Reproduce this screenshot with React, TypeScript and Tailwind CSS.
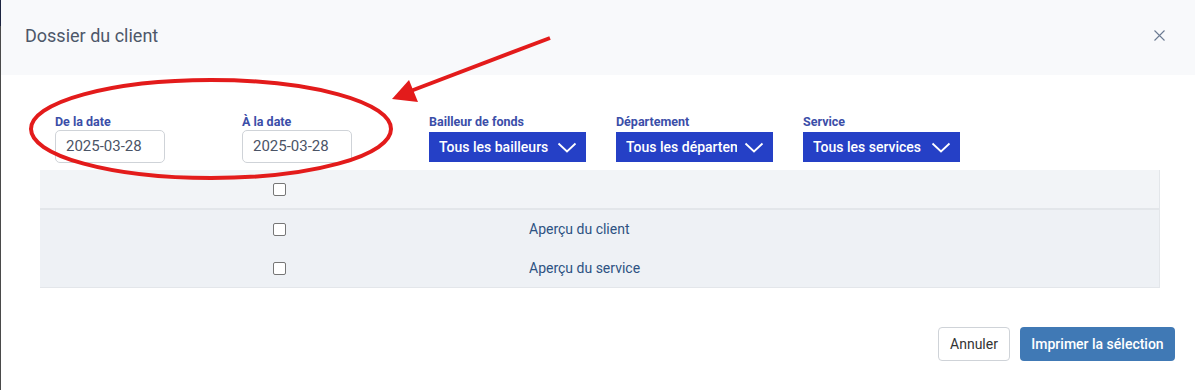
import React from "react";

const Chevron = () => (
  <svg width="20" height="11" viewBox="0 0 20 11" className="shrink-0">
    <path d="M1.5 1.5 L10 9.5 L18.5 1.5" fill="none" stroke="white" strokeWidth="1.8" />
  </svg>
);

const DateField = ({ label, value }: { label: string; value: string }) => (
  <div className="w-[187px] shrink-0">
    <div className="h-4 text-[12.5px] font-bold leading-4 text-[#3b4ea8]">{label}</div>
    <div className="flex h-[33px] w-[110px] items-center rounded-[5px] border border-[#cfd3d8] pl-[10px] text-[15px] text-[#4b5466]">
      {value}
    </div>
  </div>
);

const DropField = ({ label, value }: { label: string; value: string }) => (
  <div className="w-[187px] shrink-0">
    <div className="h-4 text-[12.5px] font-bold leading-4 text-[#3b4ea8]">{label}</div>
    <div className="mt-[2px] flex h-[30px] w-[157px] items-center bg-[#2540c6] pl-[10px] pr-[9px] text-[14px] font-medium text-white">
      <span className="flex-1 overflow-hidden whitespace-nowrap">{value}</span>
      <span className="ml-[7px]">
        <Chevron />
      </span>
    </div>
  </div>
);

const Box = () => (
  <div className="h-[13px] w-[13px] rounded-[2px] border border-[#767676] bg-white" />
);

const rows = ["Aperçu du client", "Aperçu du service"];

export default function App() {
  return (
    <div className="relative flex h-[390px] w-[1195px] overflow-hidden bg-white font-['Roboto',sans-serif]">
      {/* page edge behind the modal */}
      <div className="flex w-px shrink-0 flex-col">
        <div className="h-[26px] bg-[#1c2440]" />
        <div className="flex-1 bg-[#4a4a4a]" />
      </div>

      <div className="flex flex-1 flex-col">
        <div className="flex h-[75px] items-center justify-between bg-[#f8f9fb] pl-[24px] pr-[30px] pb-1">
          <h1 className="text-[18px] text-[#4d5769]">Dossier du client</h1>
          <svg width="11" height="11" viewBox="0 0 11 11">
            <path d="M0.5 0.5 L10.5 10.5 M10.5 0.5 L0.5 10.5" stroke="#6b7a92" strokeWidth="1.1" />
          </svg>
        </div>

        <div className="flex flex-1 flex-col pt-[39px]">
          <div className="flex pl-[54px]">
            <DateField label="De la date" value="2025-03-28" />
            <DateField label="À la date" value="2025-03-28" />
            <DropField label="Bailleur de fonds" value="Tous les bailleurs" />
            <DropField label="Département" value="Tous les départements" />
            <DropField label="Service" value="Tous les services" />
          </div>

          <div className="ml-[39px] mt-[7px] w-[1120px] border-b border-r border-[#e3e6ea]">
            <div className="flex h-[40px] items-center border-b-2 border-[#e3e6ea] bg-[#f2f4f7] pl-[233px]">
              <Box />
            </div>
            <div className="bg-[#eef1f5]">
              {rows.map((r, i) => (
                <div key={r} className={`flex items-center pl-[233px] ${i === 0 ? "h-[39px]" : "h-[38px]"}`}>
                  <Box />
                  <span className="ml-[243px] text-[14px] text-[#2d5282]">{r}</span>
                </div>
              ))}
            </div>
          </div>

          <div className="mt-auto mb-[29px] flex justify-end gap-[10px] pr-[20px]">
            <button className="h-[34px] w-[72px] rounded-[4px] border border-[#cfd3d8] bg-white text-[14px] text-[#333]">
              Annuler
            </button>
            <button className="h-[34px] w-[155px] rounded-[4px] bg-[#4079b5] text-[14px] font-medium text-white">
              Imprimer la sélection
            </button>
          </div>
        </div>
      </div>

      {/* red annotation */}
      <svg className="pointer-events-none absolute left-0 top-0" width="1195" height="390">
        <ellipse cx="211" cy="129" rx="180" ry="49" fill="none" stroke="#e31b1b" strokeWidth="4" />
        <line x1="550" y1="38" x2="408" y2="92" stroke="#e31b1b" strokeWidth="4" />
        <polygon points="392,99 409,80 418,102" fill="#e31b1b" />
      </svg>
    </div>
  );
}
